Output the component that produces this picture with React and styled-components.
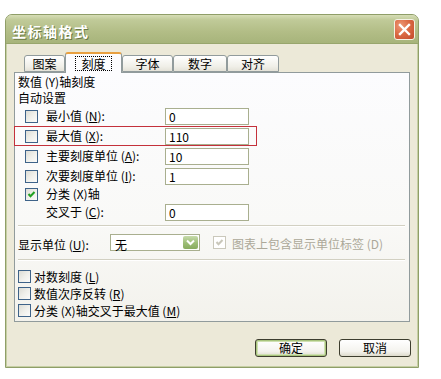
import React from "react";
import styled, { createGlobalStyle } from "styled-components";

const GlobalStyle = createGlobalStyle`
  html, body {
    margin: 0;
    padding: 0;
    background: #fff;
  }
  body {
    font-family: "Noto Sans CJK SC", "DejaVu Sans", sans-serif;
    font-size: 12px;
    color: #000;
  }
`;

const TABS = ["图案", "刻度", "字体", "数字", "对齐"];
const TAB_WIDTHS = [41, 57, 51, 54, 52];

export default function App() {
  return (
    <>
      <GlobalStyle />
      <Window>
        <TitleBar>
          <Title>坐标轴格式</Title>
          <CloseButton>
            <svg width="13" height="13" viewBox="0 0 13 13">
              <path d="M2 2 L11 11 M11 2 L2 11" stroke="#fff" strokeWidth="2.4" strokeLinecap="square" />
            </svg>
          </CloseButton>
        </TitleBar>
        <Body>
          <TabRow>
            {TABS.map((t, i) => (
              <Tab key={t} width={TAB_WIDTHS[i]} selected={i === 1}>
                {i === 1 ? <FocusLabel>{t}</FocusLabel> : t}
              </Tab>
            ))}
          </TabRow>
          <Panel>
            <Heading>数值 (Y)轴刻度</Heading>
            <Heading>自动设置</Heading>
            <ValueRow label={<>最小值 (<u>N</u>):</>} value="0" />
            <ValueRow label={<>最大值 (<u>X</u>):</>} value="110" highlighted />
            <ValueRow label={<>主要刻度单位 (<u>A</u>):</>} value="10" />
            <ValueRow label={<>次要刻度单位 (<u>I</u>):</>} value="1" />
            <Row compact>
              <Check checked />
              <Label>分类 (X)轴</Label>
            </Row>
            <Row>
              <CheckSpacer />
              <Label>交叉于 (<u>C</u>):</Label>
              <Field readOnly value="0" />
            </Row>
            <Separator />
            <UnitRow>
              <UnitLabel>显示单位 (<u>U</u>):</UnitLabel>
              <Select>
                <span>无</span>
                <DropButton>
                  <svg width="9" height="7" viewBox="0 0 9 7">
                    <path d="M1 1.5 L4.5 5 L8 1.5" fill="none" stroke="#fff" strokeWidth="2" />
                  </svg>
                </DropButton>
              </Select>
              <Check checked disabled style={{ marginLeft: 13 }} />
              <DisabledText>图表上包含显示单位标签 (D)</DisabledText>
            </UnitRow>
            <Separator />
            <OptionList>
              <Option>
                <Check />
                <OptionText>对数刻度 (<u>L</u>)</OptionText>
              </Option>
              <Option>
                <Check />
                <OptionText>数值次序反转 (<u>R</u>)</OptionText>
              </Option>
              <Option>
                <Check />
                <OptionText>分类 (X)轴交叉于最大值 (<u>M</u>)</OptionText>
              </Option>
            </OptionList>
          </Panel>
          <Footer>
            <Button primary>确定</Button>
            <Button>取消</Button>
          </Footer>
        </Body>
      </Window>
    </>
  );
}

const ValueRow = ({ label, value, highlighted }) => (
  <Row highlighted={highlighted}>
    <Check />
    <Label>{label}</Label>
    <Field readOnly value={value} />
  </Row>
);

const Check = ({ checked, disabled, style }) => (
  <CheckBox disabled={disabled} style={style}>
    {checked && (
      <svg width="11" height="11" viewBox="0 0 11 11">
        <path d="M2.5 5 L4.5 7.2 L8.5 3" fill="none" stroke={disabled ? "#c9c7ba" : "#21a121"} strokeWidth="2" />
      </svg>
    )}
  </CheckBox>
);

const Window = styled.div`
  box-sizing: border-box;
  width: 414px;
  height: 354px;
  margin: 14px 0 0 5px;
  display: flex;
  flex-direction: column;
  background: #ece9d8;
  border: 1px solid #8f9e68;
  border-radius: 7px 7px 0 0;
  overflow: hidden;
  box-shadow: inset 1px 0 #c6cfa4, inset -1px 0 #c6cfa4, inset 0 -1px #c6cfa4;
`;

const TitleBar = styled.div`
  height: 28px;
  flex: none;
  display: flex;
  align-items: center;
  justify-content: space-between;
  padding: 0 3px 0 6px;
  background: linear-gradient(#d6ddb6 0%, #c0ca98 18%, #b2bd86 60%, #a7b47b 100%);
  border-bottom: 1px solid #98a66d;
`;

const Title = styled.div`
  color: #fff;
  font-size: 14px;
  font-weight: bold;
  padding-top: 3px;
  letter-spacing: 1.5px;
  text-shadow: 1px 1px 0 #6a7a45;
`;

const CloseButton = styled.div`
  box-sizing: border-box;
  width: 21px;
  height: 21px;
  display: flex;
  align-items: center;
  justify-content: center;
  border: 1px solid #f4f2e6;
  border-radius: 3px;
  background: radial-gradient(circle at 30% 30%, #ed9a78 0%, #dc6b45 45%, #c24a2c 100%);
`;

const Body = styled.div`
  flex: 1;
  display: flex;
  flex-direction: column;
  padding: 8px 8px 0 8px;
`;

const TabRow = styled.div`
  height: 20px;
  display: flex;
  align-items: flex-end;
  padding-left: 10px;
  position: relative;
  z-index: 1;
`;

const Tab = styled.div`
  box-sizing: border-box;
  width: ${({ width }) => width}px;
  height: ${({ selected }) => (selected ? 21 : 17)}px;
  margin-bottom: ${({ selected }) => (selected ? -1 : 0)}px;
  display: flex;
  align-items: center;
  justify-content: center;
  border: 1px solid #919b9c;
  border-bottom: ${({ selected }) => (selected ? "none" : "1px solid #919b9c")};
  border-top: ${({ selected }) => (selected ? "2px solid #e8a040" : "1px solid #919b9c")};
  border-radius: 3px 3px 0 0;
  background: ${({ selected }) => (selected ? "#fcfcfe" : "linear-gradient(#ffffff, #f0efe8 70%, #e4e2d8)")};
  font-size: 12px;
  line-height: 14px;
  padding-top: ${({ selected }) => (selected ? 0 : 1)}px;
`;

const FocusLabel = styled.span`
  border: 1px dotted #000;
  padding: 0 5px;
  line-height: 13px;
`;

const Panel = styled.div`
  box-sizing: border-box;
  height: 250px;
  border: 1px solid #919b9c;
  background: linear-gradient(#fcfcfe 0%, #f9f9f7 60%, #f3f2ec 100%);
  padding: 1px 0 0 3px;
  display: flex;
  flex-direction: column;
`;

const Heading = styled.div`
  height: 16px;
  line-height: 16px;
`;

const Row = styled.div`
  box-sizing: border-box;
  width: 243px;
  height: ${({ compact }) => (compact ? 16 : 20)}px;
  margin-left: -4px;
  padding-left: 11px;
  display: flex;
  align-items: center;
  outline: ${({ highlighted }) => (highlighted ? "1px solid #c4313b" : "none")};
  outline-offset: -1px;
`;

const CheckBox = styled.div`
  box-sizing: border-box;
  width: 13px;
  height: 13px;
  flex: none;
  display: flex;
  align-items: center;
  justify-content: center;
  border: 1px solid ${({ disabled }) => (disabled ? "#cac8bb" : "#3e6389")};
  background: ${({ disabled }) => (disabled ? "#fff" : "linear-gradient(135deg, #dcdcd5 0%, #efefea 50%, #fbfbfa 100%)")};
`;

const CheckSpacer = styled.div`
  width: 13px;
  flex: none;
`;

const Label = styled.div`
  width: 119px;
  margin-left: 8px;
  flex: none;
  white-space: nowrap;
  line-height: 16px;
`;

const Field = styled.input`
  box-sizing: border-box;
  width: 84px;
  height: 17px;
  border: 1px solid #a9af8f;
  background: #fff;
  padding: 0 3px;
  font-family: inherit;
  font-size: 12px;
  color: #000;
  outline: none;
`;

const Separator = styled.div`
  height: 0;
  margin: 3px 4px 0 0;
  border-top: 1px solid #d2d0c2;
  border-bottom: 1px solid #fff;
`;

const UnitRow = styled.div`
  height: 27px;
  display: flex;
  align-items: center;
  padding-top: 2px;
`;

const UnitLabel = styled.div`
  width: 92px;
  flex: none;
  padding-top: 4px;
`;

const Select = styled.div`
  box-sizing: border-box;
  width: 90px;
  height: 17px;
  display: flex;
  align-items: center;
  justify-content: space-between;
  border: 1px solid #a9af8f;
  background: #fff;
  padding: 0 1px 0 4px;
  span {
    padding-top: 3px;
  }
`;

const DropButton = styled.div`
  box-sizing: border-box;
  width: 15px;
  height: 13px;
  display: flex;
  align-items: center;
  justify-content: center;
  border-radius: 2px;
  background: linear-gradient(#c7dbab, #9cbd76 55%, #88ab5f);
`;

const DisabledText = styled.div`
  margin-left: 6px;
  color: #aca899;
  white-space: nowrap;
  padding-top: 2px;
`;

const OptionList = styled.div`
  display: flex;
  flex-direction: column;
  padding-top: 7px;
`;

const Option = styled.div`
  height: 17px;
  display: flex;
  align-items: center;
`;

const OptionText = styled.div`
  margin-left: 3px;
  white-space: nowrap;
`;

const Footer = styled.div`
  display: flex;
  justify-content: flex-end;
  gap: 12px;
  padding-top: 17px;
  margin-right: -1px;
`;

const Button = styled.div`
  box-sizing: border-box;
  width: 72px;
  height: 18px;
  display: flex;
  align-items: center;
  justify-content: center;
  border: 1px solid #3d3d2e;
  border-radius: 3px;
  background: linear-gradient(#ffffff, #f4f3ee 70%, #dedbcc);
  box-shadow: ${({ primary }) => (primary ? "inset 0 0 0 1px #a8c47d, inset 0 0 0 2px #cfe0b2" : "none")};
  font-size: 12px;
  line-height: 14px;
`;
